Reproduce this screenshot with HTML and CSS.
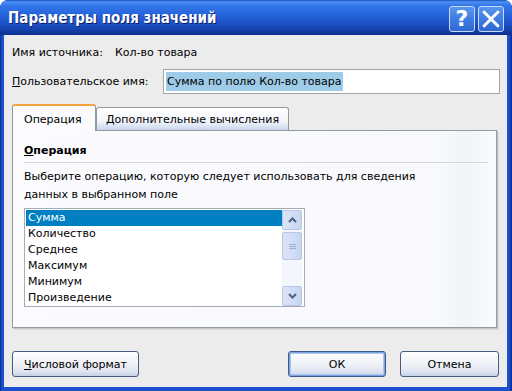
FILE: index.html
```html
<!DOCTYPE html>
<html lang="ru">
<head>
    <meta charset="UTF-8">
    <title>Параметры поля значений</title>
    <link rel="stylesheet" href="styles.css">
</head>
<body>
    <div class="window">
        <div class="titlebar">
            <span class="title">Параметры поля значений</span>
            <div class="title-buttons">
                <span class="tbtn help">?</span>
                <span class="tbtn close">
                    <svg width="16" height="16" viewBox="0 0 16 16">
                        <path d="M2 2 L14 14 M14 2 L2 14" stroke="#fff" stroke-width="2.6" stroke-linecap="square"/>
                    </svg>
                </span>
            </div>
        </div>

        <div class="dialog">
            <div class="source-row">
                <span class="source-label">Имя источника:</span>
                <span>Кол-во товара</span>
            </div>

            <div class="name-row">
                <label class="name-label"><u>П</u>ользовательское имя:</label>
                <div class="name-input"><span class="selected-text">Сумма по полю Кол-во товара</span></div>
            </div>

            <div class="tabs">
                <div class="tab active">Операция</div>
                <div class="tab">Дополнительные вычисления</div>
            </div>

            <div class="panel">
                <div class="panel-heading"><u>О</u>перация</div>
                <div class="separator"></div>
                <p class="panel-text">Выберите операцию, которую следует использовать для сведения<br>данных в выбранном поле</p>

                <div class="listbox">
                    <ul class="list-items">
                        <li class="selected">Сумма</li>
                        <li>Количество</li>
                        <li>Среднее</li>
                        <li>Максимум</li>
                        <li>Минимум</li>
                        <li>Произведение</li>
                    </ul>
                    <div class="scrollbar">
                        <div class="sb-btn">
                            <svg width="9" height="6" viewBox="0 0 9 6"><path d="M1 5 L4.5 1.5 L8 5" fill="none" stroke="#4d6185" stroke-width="2"/></svg>
                        </div>
                        <div class="sb-thumb">
                            <svg width="7" height="7" viewBox="0 0 7 7"><path d="M0 1.5 H7 M0 3.5 H7 M0 5.5 H7" stroke="#9aaed0" stroke-width="1"/></svg>
                        </div>
                        <div class="sb-track"></div>
                        <div class="sb-btn">
                            <svg width="9" height="6" viewBox="0 0 9 6"><path d="M1 1 L4.5 4.5 L8 1" fill="none" stroke="#4d6185" stroke-width="2"/></svg>
                        </div>
                    </div>
                </div>
            </div>

            <div class="button-row">
                <button class="btn"><u>Ч</u>исловой формат</button>
                <div class="button-group">
                    <button class="btn default">ОК</button>
                    <button class="btn">Отмена</button>
                </div>
            </div>
        </div>
    </div>
</body>
</html>
```

FILE: styles.css
```css
body {
    margin: 0;
    padding: 0;
    background-color: #ffffff;
    font-family: 'DejaVu Sans', Verdana, sans-serif;
    font-size: 11px;
    color: #000;
}
.window {
    width: 512px;
    height: 391px;
    box-sizing: border-box;
    display: flex;
    flex-direction: column;
    border-radius: 8px 8px 0 0;
    background: linear-gradient(90deg, #0a2a8c 0, #1c50d0 2px, #1c50d0 509px, #0a2a8c 512px);
    overflow: hidden;
}
.titlebar {
    height: 35px;
    flex-shrink: 0;
    display: flex;
    align-items: center;
    justify-content: space-between;
    padding: 0 8px 0 8px;
    background: linear-gradient(#1a4fc0 0, #4d93f5 2px, #3579ea 5px, #2664dc 14px, #1f55cc 22px, #1440aa 30px, #0c2f8e 35px);
    border-radius: 8px 8px 0 0;
}
.title {
    color: #fff;
    font-family: 'DejaVu Sans Condensed', 'DejaVu Sans', sans-serif;
    font-stretch: condensed;
    font-weight: bold;
    font-size: 15px;
    text-shadow: 1px 1px 0 #0a1e6a;
    margin-top: 1px;
}
.title-buttons {
    display: flex;
    gap: 3px;
    margin-top: 3px;
}
.tbtn {
    width: 26px;
    height: 26px;
    box-sizing: border-box;
    border: 1px solid #c8d8f8;
    border-radius: 3px;
    background: linear-gradient(#5a96ee, #3f7de2 50%, #2e68d2);
    display: flex;
    align-items: center;
    justify-content: center;
    color: #fff;
}
.help {
    font-family: 'DejaVu Sans', sans-serif;
    font-weight: bold;
    font-size: 22px;
    line-height: 1;
}
.close svg {
    width: 18px;
    height: 18px;
}
.dialog {
    flex: 1;
    margin: 0 5px 4px 4px;
    background-color: #ececec;
    padding: 11px 7px 0 8px;
}
.source-row {
    height: 14px;
    line-height: 14px;
    display: flex;
}
.source-label {
    width: 103px;
}
.name-row {
    display: flex;
    align-items: center;
    margin-top: 9px;
}
.name-label {
    width: 151px;
}
.name-input {
    flex: 1;
    height: 25px;
    box-sizing: border-box;
    border: 1px solid #a5a5a5;
    background-color: #fff;
    padding: 2px 2px;
    line-height: 19px;
}
.selected-text {
    display: inline-block;
    background-color: #9dcbe8;
    padding: 0 1px;
}
.tabs {
    display: flex;
    align-items: flex-end;
    margin-top: 10px;
    height: 26px;
    position: relative;
    z-index: 1;
}
.tab {
    height: 23px;
    box-sizing: border-box;
    border: 1px solid #919b9c;
    border-bottom: none;
    border-radius: 3px 3px 0 0;
    background: linear-gradient(#ffffff, #f3f5fb 60%, #c9d6ee);
    padding: 0 9px;
    line-height: 23px;
}
.tab.active {
    height: 27px;
    margin-bottom: -1px;
    width: 84px;
    padding: 0 11px;
    background: #fbfbfd;
    border-top: 2px solid #f3a33a;
    line-height: 28px;
}
.panel {
    width: 485px;
    height: 198px;
    box-sizing: border-box;
    border: 1px solid #919b9c;
    background: linear-gradient(90deg, #fbfbfe 0, #f8f9fc 88%, #f3f4f9 94%, #fafbfd 100%);
    box-shadow: 1px 1px 0 #c3c6cc, 2px 2px 0 #dcdcdc;
    padding: 13px 8px 0 11px;
}
.panel-heading {
    font-weight: bold;
    line-height: 14px;
    height: 14px;
}
.separator {
    height: 1px;
    background-color: #d4d6dc;
    margin-top: 4px;
}
.panel-text {
    margin: 5px 0 0 0;
    line-height: 18px;
}
.listbox {
    margin-top: 4px;
    width: 281px;
    height: 99px;
    box-sizing: border-box;
    border: 1px solid #a5acb5;
    background-color: #fff;
    padding: 1px 1px 0 1px;
    display: flex;
}
.list-items {
    list-style: none;
    margin: 0;
    padding: 0;
    flex: 1;
}
.list-items li {
    height: 16px;
    line-height: 16px;
    padding-left: 2px;
}
.list-items li.selected {
    background-color: #0080c3;
    color: #fff;
}
.scrollbar {
    width: 20px;
    margin-right: 1px;
    display: flex;
    flex-direction: column;
    background-color: #f3f6fd;
}
.sb-btn, .sb-thumb {
    height: 20px;
    box-sizing: border-box;
    border: 1px solid #b6c6e6;
    border-radius: 2px;
    background: linear-gradient(90deg, #dbe5f7, #c7d6f1);
    display: flex;
    align-items: center;
    justify-content: center;
}
.sb-thumb {
    height: 28px;
    margin-top: 2px;
}
.sb-track {
    flex: 1;
}
.button-row {
    display: flex;
    justify-content: space-between;
    margin-top: 23px;
    padding-right: 1px;
}
.button-group {
    display: flex;
    gap: 14px;
}
.btn {
    height: 26px;
    width: 99px;
    box-sizing: border-box;
    border: 1px solid #4a5d7e;
    border-radius: 3px;
    background: linear-gradient(#ffffff, #f1f3f8 45%, #dfe5f1 80%, #c6d1e6);
    font-family: 'DejaVu Sans', Verdana, sans-serif;
    font-size: 11px;
    color: #000;
    padding: 0;
}
.btn:first-child {
    width: 127px;
}
.btn.default {
    width: 98px;
    box-shadow: inset 0 0 0 1px #7ba4dc, inset 0 0 0 2px #aac6ee;
    border-color: #3a5a8c;
}
u {
    text-decoration: underline;
    text-underline-offset: 1px;
}
```
